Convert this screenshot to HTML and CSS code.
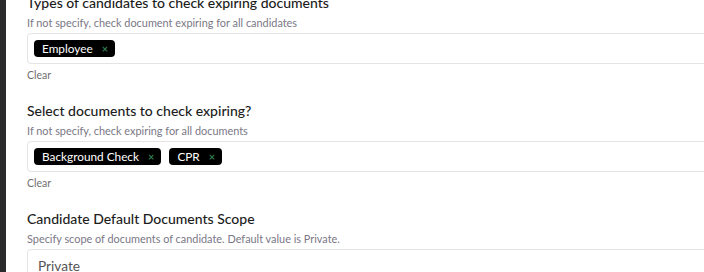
FILE: index.html
```html
<!DOCTYPE html>
<html>
<head>
<meta charset="utf-8">
<link rel="stylesheet" href="styles.css">
</head>
<body>
<div class="page">
  <div class="rail"></div>
  <main class="content">
    <section class="field">
      <h3 class="title">Types of candidates to check expiring documents</h3>
      <p class="help">If not specify, check document expiring for all candidates</p>
      <div class="box">
        <span class="tag">Employee<span class="x">×</span></span>
      </div>
      <a class="clear">Clear</a>
    </section>
    <section class="field">
      <h3 class="title">Select documents to check expiring?</h3>
      <p class="help">If not specify, check expiring for all documents</p>
      <div class="box">
        <span class="tag">Background Check<span class="x">×</span></span>
        <span class="tag">CPR<span class="x">×</span></span>
      </div>
      <a class="clear">Clear</a>
    </section>
    <section class="field">
      <h3 class="title">Candidate Default Documents Scope</h3>
      <p class="help">Specify scope of documents of candidate. Default value is Private.</p>
      <div class="box select">Private</div>
    </section>
  </main>
</div>
</body>
</html>
```

FILE: styles.css
```css
html, body {
  margin: 0;
  padding: 0;
  background: #fff;
  overflow: hidden;
}
body {
  width: 704px;
  height: 272px;
  font-family: "Lato", "Noto Sans", sans-serif;
}
.page {
  display: flex;
  height: 272px;
}
.rail {
  width: 6px;
  flex: none;
  background: #2a2a2c;
}
.content {
  flex: none;
  width: 760px;
  padding-left: 21px;
  margin-top: -7px;
  display: flex;
  flex-direction: column;
}
.field {
  display: flex;
  flex-direction: column;
  margin-bottom: 18px;
}
.title {
  margin: 0;
  font-size: 14px;
  line-height: 20px;
  font-weight: 500;
  color: #1c1c1c;
}
.help {
  margin: 2px 0 0;
  font-size: 10.9px;
  line-height: 16px;
  color: #7a7886;
}
.box {
  margin-top: 2px;
  border: 1px solid #e4e4e4;
  border-radius: 4px;
  padding: 6px;
  display: flex;
  gap: 8px;
  align-items: center;
}
.tag {
  display: inline-flex;
  align-items: center;
  height: 17px;
  padding: 0 7px 0 8px;
  background: #000;
  color: #fff;
  border-radius: 4px;
  font-size: 11.8px;
}
.x {
  margin-left: 9px;
  color: #2f7a4e;
  font-size: 11px;
  font-weight: 700;
}
.clear {
  margin-top: 3px;
  font-size: 10.5px;
  line-height: 16px;
  color: #6f6f6f;
}
.select {
  padding: 6px 10px;
  font-size: 13.7px;
  line-height: 20px;
  color: #555;
}
```
